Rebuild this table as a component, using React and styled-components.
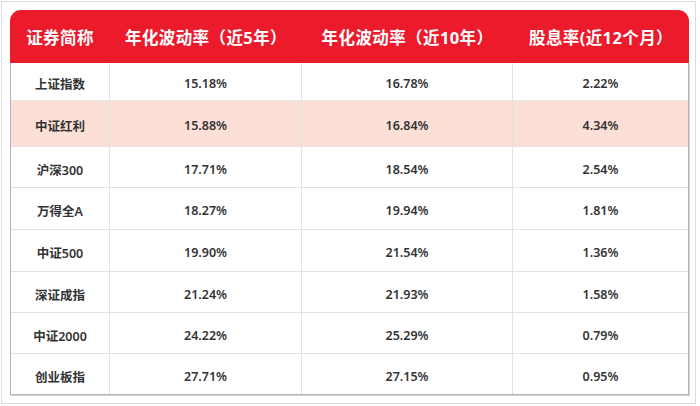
import React from 'react'
import styled, { createGlobalStyle } from 'styled-components'

const rows = [
  { name: '上证指数', v5: '15.18%', v10: '16.78%', div: '2.22%', h: 38 },
  { name: '中证红利', v5: '15.88%', v10: '16.84%', div: '4.34%', h: 46, hot: true },
  { name: '沪深300', v5: '17.71%', v10: '18.54%', div: '2.54%', h: 41 },
  { name: '万得全A', v5: '18.27%', v10: '19.94%', div: '1.81%', h: 42 },
  { name: '中证500', v5: '19.90%', v10: '21.54%', div: '1.36%', h: 42 },
  { name: '深证成指', v5: '21.24%', v10: '21.93%', div: '1.58%', h: 41 },
  { name: '中证2000', v5: '24.22%', v10: '25.29%', div: '0.79%', h: 41 },
  { name: '创业板指', v5: '27.71%', v10: '27.15%', div: '0.95%', h: 40 },
]

const cols = '100px 192px 211px 176px'

const GlobalStyle = createGlobalStyle`
  body {
    margin: 0;
    background: #ffffff;
    font-family: "Noto Sans", "Noto Sans CJK SC", sans-serif;
  }
`

function App() {
  return (
    <>
      <GlobalStyle />
      <Page>
        <Frame>
          <Table>
            <HeadRow>
              <HeadCell>证券简称</HeadCell>
              <HeadCell>年化波动率（近5年）</HeadCell>
              <HeadCell>年化波动率（近10年）</HeadCell>
              <HeadCell>股息率(近12个月）</HeadCell>
            </HeadRow>
            <Body>
              {rows.map((r, i) => (
                <Row key={i} $h={r.h} $hot={r.hot} $last={i === rows.length - 1}>
                  <Cell>{r.name}</Cell>
                  <Cell>{r.v5}</Cell>
                  <Cell>{r.v10}</Cell>
                  <Cell $last>{r.div}</Cell>
                </Row>
              ))}
            </Body>
          </Table>
        </Frame>
      </Page>
    </>
  )
}

const Page = styled.div`
  width: 700px;
  height: 406px;
  padding: 1px;
  box-sizing: border-box;
`

const Frame = styled.div`
  width: 695px;
  height: 403px;
  box-sizing: border-box;
  border: 1px solid #dcdcdc;
  padding: 8px 0 0 8px;
`

const Table = styled.div`
  width: 679px;
  display: flex;
  flex-direction: column;
`

const HeadRow = styled.div`
  display: grid;
  grid-template-columns: ${cols};
  height: 53px;
  background: #eb1b2b;
  border-radius: 11px 11px 0 0;
`

const HeadCell = styled.div`
  display: flex;
  align-items: center;
  justify-content: center;
  color: #ffffff;
  font-size: 16.5px;
  font-weight: 700;
  white-space: nowrap;
  letter-spacing: 0.4px;
`

const Body = styled.div`
  border: 1px solid #b4b4b4;
  border-top: none;
  box-shadow: 1px 1px 0 #d2d2d2;
  display: flex;
  flex-direction: column;
`

const Row = styled.div`
  display: grid;
  grid-template-columns: 99px 192px 211px 175px;
  height: ${p => p.$h}px;
  box-sizing: border-box;
  background: ${p => (p.$hot ? '#fce0d8' : '#ffffff')};
  border-bottom: ${p => (p.$last ? 'none' : '1px solid #e2e2e2')};
`

const Cell = styled.div`
  display: flex;
  align-items: center;
  justify-content: center;
  padding-top: 4px;
  color: #333333;
  font-size: 12.5px;
  font-weight: 600;
  border-right: ${p => (p.$last ? 'none' : '1px solid #e2e2e2')};
`

export default App
